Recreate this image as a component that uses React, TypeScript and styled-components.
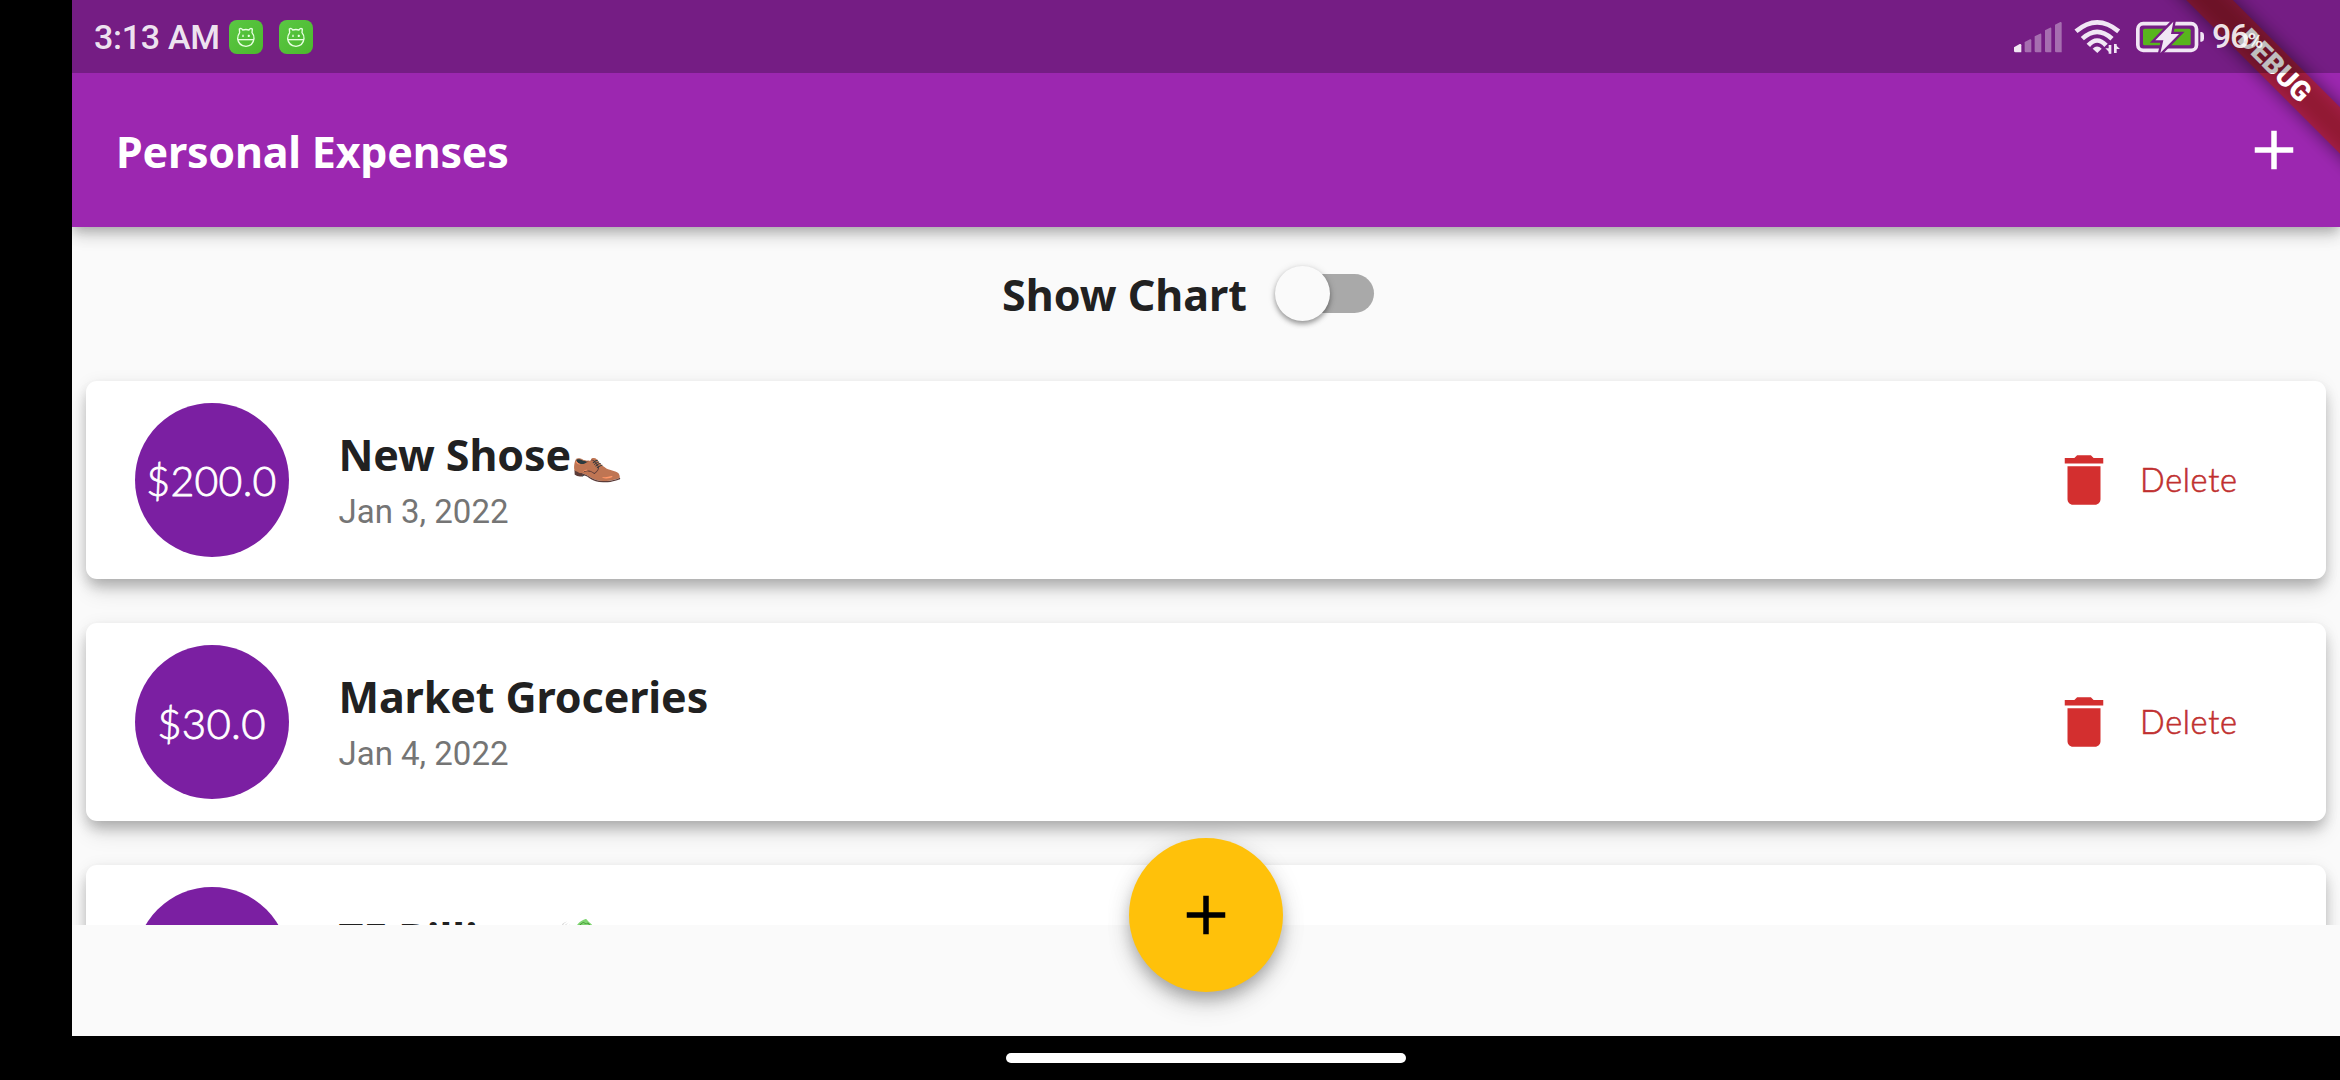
import React from "react";
import styled, { createGlobalStyle } from "styled-components";

const GlobalStyle = createGlobalStyle`
  * { box-sizing: border-box; }
  body { margin: 0; background: #000; }
`;

const heading = `"Noto Sans", "Open Sans", sans-serif`;
const rounded = `Lato, "Open Sans", sans-serif`;
const system = `Roboto, "Open Sans", sans-serif`;

const Device = styled.div`
  display: flex;
  flex-direction: column;
  width: 2340px;
  height: 1080px;
  padding-left: 72px;
  background: #000;
  overflow: hidden;
`;

const Screen = styled.div`
  position: relative;
  display: flex;
  flex-direction: column;
  height: 1036px;
  background: #fafafa;
  overflow: hidden;
`;

const Header = styled.header`
  flex: none;
  background: #9c27b0;
  box-shadow: 0 5px 10px -2px rgba(0, 0, 0, 0.2), 0 10px 14px rgba(0, 0, 0, 0.13),
    0 2px 24px rgba(0, 0, 0, 0.07);
`;

const StatusBar = styled.div`
  position: relative;
  z-index: 3;
  display: flex;
  align-items: center;
  height: 73px;
  padding-left: 22px;
  background: rgba(0, 0, 0, 0.25);
  color: rgba(255, 255, 255, 0.9);
  font-family: ${system};
  font-weight: 500;
`;

const Clock = styled.span`
  width: 135px;
  font-size: 34px;
  line-height: 40px;
  letter-spacing: -0.3px;
  white-space: nowrap;
`;

const Notification = styled.span`
  display: flex;
  width: 34px;
  height: 34px;
  margin-right: 16px;
  border-radius: 8px;
  background: linear-gradient(135deg, #5ac843, #4cb82e);
`;

const StatusIcons = styled.div`
  display: flex;
  align-items: center;
  margin-left: auto;
  padding-right: 76px;
`;

const StatusGlyph = styled.svg<{ $gap: number }>`
  display: block;
  flex: none;
  margin-right: ${(p) => p.$gap}px;
`;

const Percent = styled.span`
  display: flex;
  align-items: baseline;
  width: 52px;
  margin-top: 4px;
  font-size: 34px;
  line-height: 40px;
  letter-spacing: -1.4px;
  white-space: nowrap;
  small {
    font-size: 21px;
    letter-spacing: 0;
  }
`;

const AppBar = styled.div`
  display: flex;
  align-items: center;
  justify-content: space-between;
  height: 154px;
  padding: 0 33px 0 44px;
`;

const AppTitle = styled.h1`
  margin: 4px 0 0;
  color: #fff;
  font: 700 43px/60px ${heading};
  letter-spacing: -0.22px;
`;

const IconButton = styled.button`
  display: flex;
  padding: 0;
  border: 0;
  background: none;
  color: #fff;
`;

const DebugBanner = styled.div`
  position: absolute;
  z-index: 2;
  top: 49px;
  right: -134.5px;
  display: flex;
  align-items: center;
  justify-content: center;
  width: 400px;
  height: 33px;
  transform: rotate(45deg);
  color: #fff;
  font: 900 28px/33px ${system};
  &::before {
    content: "";
    position: absolute;
    inset: 0;
    background: rgba(0, 0, 0, 0.5);
    filter: blur(9px);
  }
  &::after {
    content: "";
    position: absolute;
    inset: 0;
    background: rgba(183, 28, 28, 0.63);
  }
  span {
    position: relative;
    z-index: 1;
  }
`;

const ChartToggle = styled.div`
  display: flex;
  flex: none;
  align-items: center;
  justify-content: center;
  height: 132px;
`;

const ToggleLabel = styled.span`
  margin-top: 4px;
  color: #212121;
  font: 700 43px/60px ${heading};
  white-space: nowrap;
`;

const Switch = styled.button`
  display: flex;
  align-items: center;
  width: 99px;
  height: 55px;
  margin: 0 36px 0 28px;
  padding: 0 0 0 8px;
  border: 0;
  background: none;
`;

const Track = styled.span`
  display: flex;
  align-items: center;
  width: 91px;
  height: 39px;
  border-radius: 20px;
  background: #a9a9a9;
`;

const Thumb = styled.span`
  flex: none;
  width: 55px;
  height: 55px;
  margin-left: -8px;
  border-radius: 50%;
  background: #fafafa;
  box-shadow: 0 3px 5px rgba(0, 0, 0, 0.34), 0 1px 8px rgba(0, 0, 0, 0.12);
`;

const List = styled.main`
  display: flex;
  flex: none;
  flex-direction: column;
  gap: 44px;
  height: 566px;
  padding: 22px 14px 0;
  overflow: hidden;
`;

const Card = styled.article`
  display: flex;
  flex: none;
  align-items: center;
  height: 198px;
  padding: 0 88.5px 0 49px;
  border-radius: 11px;
  background: #fff;
  box-shadow: 0 9px 14px -2px rgba(0, 0, 0, 0.2), 0 14px 22px -2px rgba(0, 0, 0, 0.11),
    0 2px 16px rgba(0, 0, 0, 0.08);
`;

const Amount = styled.div<{ $size: number }>`
  display: flex;
  flex: none;
  align-items: center;
  justify-content: center;
  width: 154px;
  height: 154px;
  padding: 2px 1px 0 0;
  border-radius: 50%;
  background: #7b1fa2;
  color: #fff;
  font: 300 ${(p) => p.$size}px/60px ${rounded};
  letter-spacing: 0.3px;
  -webkit-text-stroke: 0.8px #fff;
`;

const Details = styled.div`
  display: flex;
  flex: 1;
  flex-direction: column;
  margin: 0 0 0 49.5px;
`;

const Title = styled.h2`
  display: flex;
  margin: 0;
  color: #212121;
  font: 700 43px/60px ${heading};
  letter-spacing: -0.1px;
  white-space: nowrap;
`;

const Emoji = styled.span<{ $gap: number; $drop: number }>`
  margin: ${(p) => p.$drop}px 0 0 ${(p) => p.$gap}px;
  height: 50px;
  font: 400 42px/52px "Noto Color Emoji", sans-serif;
  filter: hue-rotate(-8deg) brightness(1.15);
`;

const DateText = styled.time`
  margin: 5px 0 2px;
  color: #757575;
  font: 400 33px/44px ${system};
`;

const DeleteButton = styled.button`
  display: flex;
  align-items: center;
  gap: 23px;
  padding: 0;
  border: 0;
  background: none;
  color: #c02f2f;
  font: 300 32.5px/40px ${rounded};
  letter-spacing: 0.65px;
  -webkit-text-stroke: 0.6px #c02f2f;
  svg {
    color: #d32f2f;
    -webkit-text-stroke: 0;
  }
`;

const Fab = styled.button`
  position: absolute;
  z-index: 2;
  left: 1057px;
  bottom: 44px;
  display: flex;
  align-items: center;
  justify-content: center;
  width: 154px;
  height: 154px;
  padding: 0;
  border: 0;
  border-radius: 50%;
  background: #ffc10a;
  color: #000;
  box-shadow: 0 9px 14px -2px rgba(0, 0, 0, 0.2), 0 14px 24px rgba(0, 0, 0, 0.12),
    0 3px 26px rgba(0, 0, 0, 0.1);
`;

const NavBar = styled.footer`
  display: flex;
  align-items: center;
  justify-content: center;
  height: 44px;
`;

const HomeIndicator = styled.span`
  width: 400px;
  height: 10px;
  border-radius: 5px;
  background: #fff;
`;

const AddIcon = () => (
  <svg width="66" height="66" viewBox="0 0 24 24" fill="currentColor">
    <path d="M19 13h-6v6h-2v-6H5v-2h6V5h2v6h6v2z" />
  </svg>
);

const DeleteIcon = () => (
  <svg width="66" height="66" viewBox="0 0 24 24" fill="currentColor">
    <path d="M6 19c0 1.1.9 2 2 2h8c1.1 0 2-.9 2-2V7H6v12zM19 4h-3.5l-1-1h-5l-1 1H5v2h14V4z" />
  </svg>
);

const RobotIcon = () => (
  <Notification>
    <svg width="34" height="34" viewBox="0 0 102 102" fill="none" stroke="#e9ffe2" strokeWidth="4">
      <path d="M32 38 L31 27 Q37 23 41 30 Q51 27 60 30 Q64 23 70 27 L69 38 Q76 46 75 56 Q72 78 51 79 Q28 77 26 56 Q26 46 32 38Z" />
      <path d="M26 59 H75" />
      <path d="M42 44 v7 M59 44 v7 M56 47.5 h7" />
    </svg>
  </Notification>
);

const SignalIcon = () => (
  <StatusGlyph $gap={10} width="50" height="34" viewBox="25 28 150 102" fill="#fff">
    <path fillOpacity=".9" d="M28 110 L45 100 Q50 99 50 104 V125 H33 Q28 125 28 120Z" />
    <g fillOpacity=".36">
      <path d="M60 94 L76 86 Q80 85 80 89 V125 H64 Q60 125 60 121Z" />
      <path d="M90 77 L106 69 Q110 68 110 72 V125 H94 Q90 125 90 121Z" />
      <path d="M121 59 L136 51 Q140 50 140 54 V125 H125 Q121 125 121 121Z" />
      <path d="M151 42 L167 34 Q171 33 171 37 V125 H155 Q151 125 151 121Z" />
    </g>
  </StatusGlyph>
);

const WifiIcon = () => (
  <StatusGlyph $gap={14} width="48" height="38" viewBox="206 25 144 114" fill="none" stroke="#f1e6f5" strokeWidth="14">
    <path d="M215 65 Q278 11 343 65" />
    <path d="M234 87 Q278 46 323 87" />
    <path d="M252 107 Q278 78 305 107" />
    <path d="M265 117 Q278 104 292 117 L279 130Z" fill="#f1e6f5" stroke="none" />
    <path d="M317 132 V106 M333 103 V130" strokeWidth="8" />
    <path d="M303 116 L315 116 L320 133Z M347 118 L335 118 L330 102Z" fill="#f1e6f5" stroke="none" />
  </StatusGlyph>
);

const BatteryIcon = () => (
  <StatusGlyph $gap={7} width="70" height="34" viewBox="465 57 210 102">
    <rect x="473.500" y="68" width="176" height="80" rx="16" fill="none" stroke="#f1e6f5" strokeWidth="11" />
    <rect x="489" y="83" width="143" height="50" rx="5" fill="#58b51c" />
    <path d="M661 93 h4 q7 2 7 9 v11 q0 7 -7 9 h-4z" fill="#f1e6f5" />
    <path
      d="M580 62 L526 118 H550 L541 156 L597 99 H573Z"
      fill="#f1e6f5"
      stroke="#751d84"
      strokeWidth="14"
      paintOrder="stroke"
    />
  </StatusGlyph>
);

interface Expense {
  title: string;
  emoji?: string;
  emojiGap?: number;
  emojiDrop?: number;
  amount: string;
  amountSize: number;
  date: string;
}

const expenses: Expense[] = [
  { title: "New Shose", emoji: "👞", emojiGap: 0.5, emojiDrop: 9, amount: "$200.0", amountSize: 41, date: "Jan 3, 2022" },
  { title: "Market Groceries", amount: "$30.0", amountSize: 42, date: "Jan 4, 2022" },
  { title: "TE Billing", emoji: "💸", emojiGap: 20, emojiDrop: 6, amount: "$50.0", amountSize: 42, date: "Jan 5, 2022" },
];

export default function App() {
  return (
    <Device>
      <GlobalStyle />
      <Screen>
        <Header>
          <StatusBar>
            <Clock>3:13 AM</Clock>
            <RobotIcon />
            <RobotIcon />
            <StatusIcons>
              <SignalIcon />
              <WifiIcon />
              <BatteryIcon />
              <Percent>
                96<small>%</small>
              </Percent>
            </StatusIcons>
          </StatusBar>
          <AppBar>
            <AppTitle>Personal Expenses</AppTitle>
            <IconButton aria-label="Add expense">
              <AddIcon />
            </IconButton>
          </AppBar>
        </Header>
        <DebugBanner>
          <span>DEBUG</span>
        </DebugBanner>
        <ChartToggle>
          <ToggleLabel>Show Chart</ToggleLabel>
          <Switch role="switch" aria-checked={false} aria-label="Show Chart">
            <Track>
              <Thumb />
            </Track>
          </Switch>
        </ChartToggle>
        <List>
          {expenses.map((e) => (
            <Card key={e.title}>
              <Amount $size={e.amountSize}>{e.amount}</Amount>
              <Details>
                <Title>
                  {e.title}
                  {e.emoji && (
                    <Emoji $gap={e.emojiGap ?? 0} $drop={e.emojiDrop ?? 8}>
                      {e.emoji}
                    </Emoji>
                  )}
                </Title>
                <DateText>{e.date}</DateText>
              </Details>
              <DeleteButton>
                <DeleteIcon />
                Delete
              </DeleteButton>
            </Card>
          ))}
        </List>
        <Fab aria-label="Add expense">
          <AddIcon />
        </Fab>
      </Screen>
      <NavBar>
        <HomeIndicator />
      </NavBar>
    </Device>
  );
}
